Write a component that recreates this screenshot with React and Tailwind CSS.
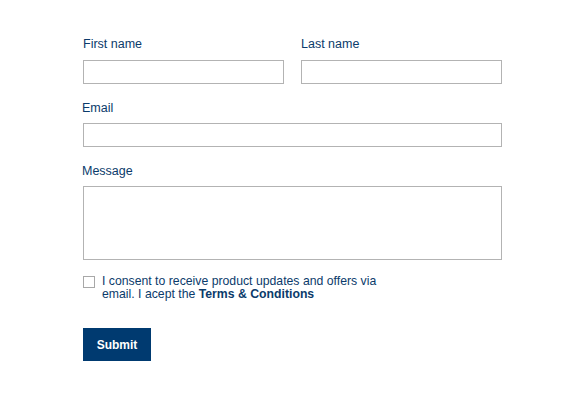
export default function App() {
  return (
    <div className="min-h-screen bg-white pt-9 pl-[83px]" style={{ fontFamily: '"Liberation Sans", Arial, sans-serif' }}>
      <form className="w-[419px] text-[#0b3b6b]">
        <div className="flex gap-[17px]">
          <div className="w-[201px]">
            <label className="block text-[12.5px] leading-4 mb-2">First name</label>
            <input className="block w-full h-6 border border-[#b3b3b3] outline-none" />
          </div>
          <div className="w-[201px]">
            <label className="block text-[12.5px] leading-4 mb-2">Last name</label>
            <input className="block w-full h-6 border border-[#b3b3b3] outline-none" />
          </div>
        </div>
        <label className="block text-[12.5px] leading-4 mt-4 mb-[7px] -ml-px">Email</label>
        <input className="block w-full h-6 border border-[#b3b3b3] outline-none" />
        <label className="block text-[12.5px] leading-4 mt-4 mb-[7px] -ml-px">Message</label>
        <textarea className="block w-full h-[74px] border border-[#b3b3b3] outline-none resize-none" />
        <div className="flex items-start gap-[7px] mt-[15px]">
          <span className="w-3 h-3 mt-px border border-[#a8a8a8] shrink-0" />
          <p className="text-[12.25px] leading-[13px] w-[290px]">
            I consent to receive product updates and offers via email. I acept the <b>Terms &amp; Conditions</b>
          </p>
        </div>
        <button type="button" className="mt-[27px] w-[68px] h-[33px] bg-[#003a70] text-white text-[12px] font-bold">
          Submit
        </button>
      </form>
    </div>
  );
}
